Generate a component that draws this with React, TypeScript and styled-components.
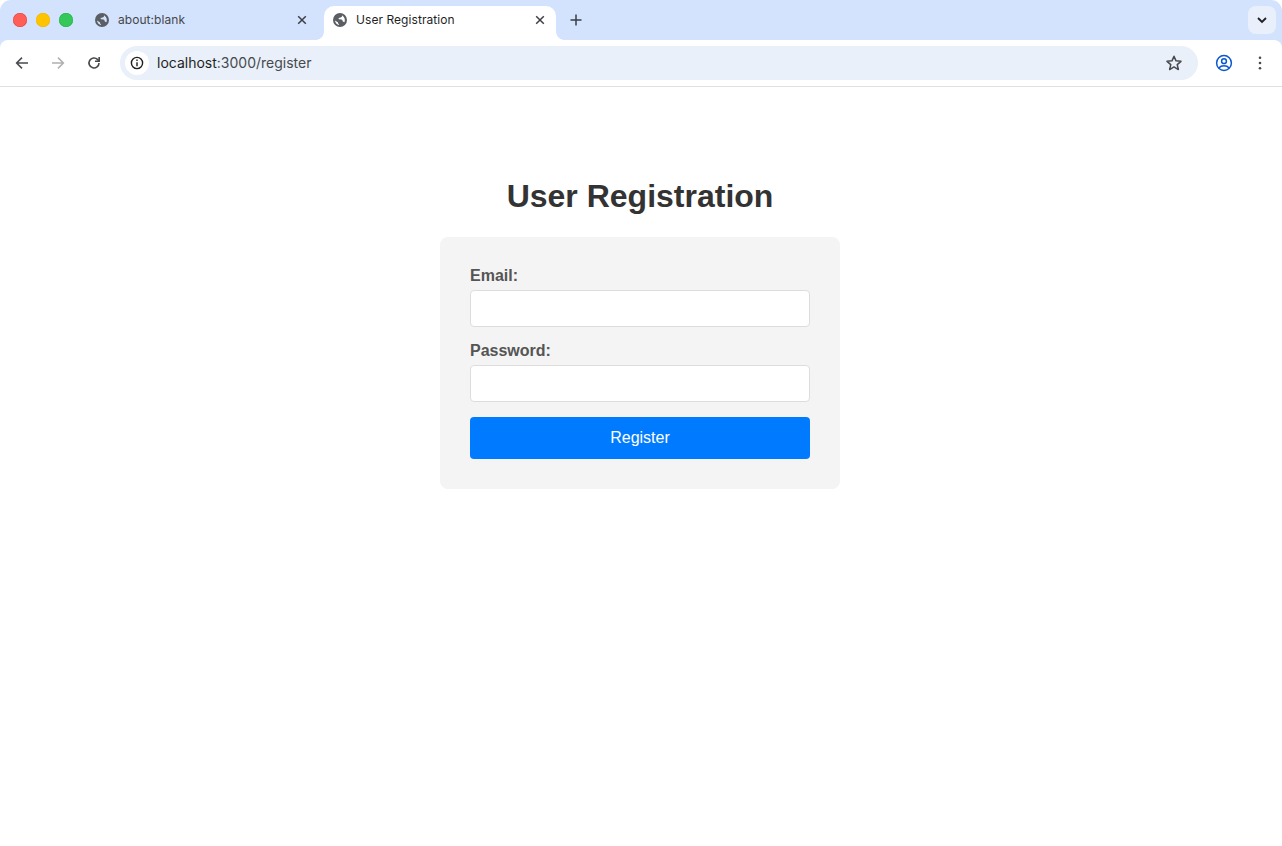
import React from "react";
import styled, { createGlobalStyle } from "styled-components";

const Global = createGlobalStyle`
  html, body { margin: 0; padding: 0; background: #fff; }
  body { font-family: "Liberation Sans", Arial, sans-serif; }
  * { box-sizing: border-box; }
`;

const Browser = styled.div`
  width: 1282px;
  height: 846px;
  display: flex;
  flex-direction: column;
  overflow: hidden;
  background: #fff;
`;

const Chrome = styled.header`
  flex: none;
  display: flex;
  flex-direction: column;
  background: #d3e3fd;
  border-radius: 11px 11px 0 0;
`;

const TabStrip = styled.div`
  height: 40px;
  flex: none;
  display: flex;
  align-items: flex-end;
  padding-left: 13px;
  padding-right: 6px;
`;

const Lights = styled.div`
  display: flex;
  gap: 9px;
  align-self: flex-start;
  margin-top: 13px;
  margin-right: 8px;
`;

const Light = styled.span<{ $c: string; $b: string }>`
  width: 14px;
  height: 14px;
  border-radius: 50%;
  background: ${(p) => p.$c};
  box-shadow: inset 0 0 0 0.5px ${(p) => p.$b};
`;

const Tab = styled.div<{ $active?: boolean }>`
  position: relative;
  width: ${(p) => (p.$active ? 232 : 243)}px;
  height: 34px;
  padding: 0 ${(p) => (p.$active ? 8 : 14)}px 6px ${(p) => (p.$active ? 8 : 13)}px;
  display: flex;
  align-items: center;
  gap: ${(p) => (p.$active ? 8 : 8)}px;
  background: ${(p) => (p.$active ? "#fff" : "transparent")};
  border-radius: 10px 10px 0 0;
  color: ${(p) => (p.$active ? "#1f1f1f" : "#45474a")};
  ${(p) =>
    p.$active &&
    `
    &::before, &::after {
      content: "";
      position: absolute;
      bottom: 0;
      width: 8px;
      height: 8px;
      background: radial-gradient(circle at var(--cx) 0, transparent 7.5px, #fff 8px);
    }
    &::before { left: -8px; --cx: 0; }
    &::after { right: -8px; --cx: 100%; }
  `}
`;

const TabTitle = styled.span`
  flex: 1;
  font-family: Inter, "Noto Sans", sans-serif;
  font-size: 12px;
  line-height: 16px;
  letter-spacing: 0.06px;
  white-space: nowrap;
`;

const NewTab = styled.div`
  width: 20px;
  height: 20px;
  margin: 0 0 10px 10px;
  display: flex;
  align-items: center;
  justify-content: center;
`;

const Spacer = styled.div`
  flex: 1;
`;

const TabSearch = styled.div`
  width: 28px;
  height: 28px;
  align-self: flex-start;
  margin-top: 6px;
  border-radius: 8px;
  background: #e9f0fb;
  display: flex;
  align-items: center;
  justify-content: center;
`;

const Toolbar = styled.div`
  height: 47px;
  flex: none;
  display: flex;
  align-items: flex-start;
  padding: 6px 0 0 4px;
  background: #fff;
  border-bottom: 1px solid #e0e0e0;
  border-radius: 8px 8px 0 0;
`;

const NavButton = styled.div<{ $w?: number }>`
  width: ${(p) => p.$w ?? 36}px;
  height: 34px;
  flex: none;
  display: flex;
  align-items: center;
  justify-content: center;
`;

const Omnibox = styled.div`
  width: 1078px;
  height: 34px;
  flex: none;
  margin: 0 8px;
  padding: 0 15px 0 5px;
  display: flex;
  align-items: center;
  border-radius: 17px;
  background: #e9f0f9;
`;

const SiteInfo = styled.div`
  width: 24px;
  height: 24px;
  border-radius: 50%;
  background: #fff;
  display: flex;
  align-items: center;
  justify-content: center;
  margin-right: 8px;
`;

const Url = styled.div`
  flex: 1;
  padding-bottom: 1px;
  font-family: Inter, "Noto Sans", sans-serif;
  font-size: 14px;
  line-height: 17px;
  color: #1f1f1f;
  span { color: #474a4d; }
`;

const Page = styled.main`
  flex: 1;
  display: flex;
  flex-direction: column;
  align-items: center;
  padding: 91px 2px 0 0;
`;

const Heading = styled.h1`
  margin: 0 0 22px;
  font-size: 32px;
  line-height: 37px;
  font-weight: 700;
  color: #333;
  text-align: center;
`;

const Card = styled.form`
  width: 400px;
  padding: 30px;
  background: #f4f4f4;
  border-radius: 8px;
  display: flex;
  flex-direction: column;
`;

const Label = styled.label`
  display: block;
  font-size: 16px;
  line-height: 18px;
  font-weight: 700;
  color: #555;
  margin-bottom: 5px;
`;

const Input = styled.input`
  display: block;
  width: 100%;
  height: 37px;
  padding: 10px;
  margin-bottom: 15px;
  border: 1px solid #ddd;
  border-radius: 4px;
  background: #fff;
  font-size: 14px;
  outline: none;
`;

const Submit = styled.button`
  width: 100%;
  height: 42px;
  border: 0;
  border-radius: 4px;
  background: #007bff;
  color: #fff;
  font-family: "Liberation Sans", Arial, sans-serif;
  font-size: 16px;
  padding: 0;
`;

const Globe = () => (
  <svg width="14" height="14" viewBox="0 0 14 14" fill="#5b5e63" style={{ flex: "none", margin: "0 1px" }}>
    <path
      fillRule="evenodd"
      d="M7 0a7 7 0 1 0 0 14a7 7 0 1 0 0-14Z M9 2.2C9.5 3.6 8.3 4.6 6.4 4.8C5.4 5 5.2 6 6.2 6.3L8.4 6.6C9.4 6.8 9.6 7.6 9.8 8.4L11.4 9.2C12.2 7.5 12.2 4.6 9 2.2Z M1.9 7.6L4.8 9.2L5.2 10.6L6.2 11.8L5.6 12C3.8 11.4 2.4 10 1.9 7.6Z"
    />
  </svg>
);

const Close = () => (
  <svg width="16" height="16" viewBox="0 0 16 16" fill="none" stroke="#3c3f43" strokeWidth="1.5" style={{ flex: "none" }}>
    <path d="M4.2 4.2l7.6 7.6M11.8 4.2l-7.6 7.6" />
  </svg>
);

const Arrow = ({ color, flip }: { color: string; flip?: boolean }) => (
  <svg width="16" height="16" viewBox="0 0 16 16" fill="none" stroke={color} strokeWidth="1.5" style={flip ? { transform: "scaleX(-1)" } : undefined}>
    <path d="M14 8H2.8M8 2.6L2.6 8 8 13.4" />
  </svg>
);

export default function App() {
  return (
    <>
      <Global />
      <Browser>
        <Chrome>
          <TabStrip>
            <Lights>
              <Light $c="#ff5f57" $b="#e0443e" />
              <Light $c="#ffc400" $b="#eeb400" />
              <Light $c="#34c759" $b="#1fb348" />
            </Lights>
            <Tab>
              <Globe />
              <TabTitle>about:blank</TabTitle>
              <Close />
            </Tab>
            <Tab $active>
              <Globe />
              <TabTitle>User Registration</TabTitle>
              <Close />
            </Tab>
            <NewTab>
              <svg width="14" height="14" viewBox="0 0 14 14" stroke="#3c3f43" strokeWidth="1.5">
                <path d="M7 1.5v11M1.5 7h11" />
              </svg>
            </NewTab>
            <Spacer />
            <TabSearch>
              <svg width="12" height="12" viewBox="0 0 12 12" fill="none" stroke="#1f1f1f" strokeWidth="1.8">
                <path d="M2 4l4 4 4-4" />
              </svg>
            </TabSearch>
          </TabStrip>
          <Toolbar>
            <NavButton>
              <Arrow color="#474a4d" />
            </NavButton>
            <NavButton>
              <Arrow color="#aeb0b2" flip />
            </NavButton>
            <NavButton>
              <svg width="16" height="16" viewBox="0 0 16 16" fill="none" stroke="#474a4d" strokeWidth="1.6">
                <path d="M13 8a5 5 0 1 1-1.5-3.6L13 6" />
                <path d="M13.2 2v4.2H9" />
              </svg>
            </NavButton>
            <Omnibox>
              <SiteInfo>
                <svg width="14" height="14" viewBox="0 0 14 14" fill="none" stroke="#1f1f1f" strokeWidth="1.4">
                  <circle cx="7" cy="7" r="5.6" />
                  <path d="M7 6.2v4" />
                  <path d="M7 3.6v1.4" />
                </svg>
              </SiteInfo>
              <Url>
                localhost<span>:3000/register</span>
              </Url>
              <svg width="18" height="18" viewBox="0 0 24 24" fill="none" stroke="#474a4d" strokeWidth="2" strokeLinejoin="round">
                <path d="M12 3l2.7 6.1 6.6.7-5 4.4 1.5 6.5L12 17.3l-5.8 3.4 1.5-6.5-5-4.4 6.6-.7z" />
              </svg>
            </Omnibox>
            <NavButton>
              <svg width="18" height="18" viewBox="0 0 18 18" fill="none" stroke="#0b57d0" strokeWidth="1.5">
                <circle cx="9" cy="9" r="7.4" />
                <circle cx="9" cy="7.2" r="2.4" />
                <path d="M3.8 14c1.4-1.6 3.2-2.2 5.2-2.2s3.8.6 5.2 2.2" />
              </svg>
            </NavButton>
            <NavButton>
              <svg width="16" height="16" viewBox="0 0 16 16" fill="#474a4d">
                <circle cx="8" cy="2.8" r="1.3" />
                <circle cx="8" cy="8" r="1.3" />
                <circle cx="8" cy="13.2" r="1.3" />
              </svg>
            </NavButton>
          </Toolbar>
        </Chrome>
        <Page>
          <Heading>User Registration</Heading>
          <Card>
            <Label htmlFor="email">Email:</Label>
            <Input id="email" type="email" />
            <Label htmlFor="password">Password:</Label>
            <Input id="password" type="password" />
            <Submit type="button">Register</Submit>
          </Card>
        </Page>
      </Browser>
    </>
  );
}
